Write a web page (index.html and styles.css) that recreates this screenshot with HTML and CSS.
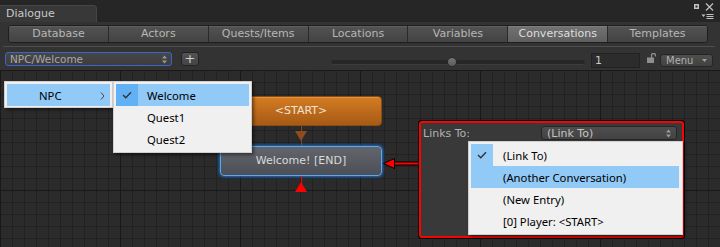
FILE: index.html
```html
<!DOCTYPE html>
<html>
<head>
<meta charset="utf-8">
<title>Dialogue</title>
<link rel="stylesheet" href="styles.css">
</head>
<body>
<div class="window">
  <div class="titlebar">
    <div class="wintab">Dialogue</div>
    <svg class="winctrl" viewBox="0 0 20 17" width="20" height="17">
      <rect x="0" y="1" width="5" height="5" fill="#c2c2c2"/>
      <rect x="1.5" y="2.5" width="2" height="2" fill="#2a2a2a"/>
      <path d="M12 0.5 L19 7.5 M19 0.5 L12 7.5" stroke="#c2c2c2" stroke-width="1.2" fill="none"/>
      <polygon points="7.5,11.5 11.5,11.5 9.5,14" fill="#c2c2c2"/>
      <path d="M12.5 11.5 H19.5 M12.5 13.5 H19.5 M12.5 15.5 H19.5" stroke="#c2c2c2" stroke-width="1" fill="none"/>
    </svg>
  </div>
  <div class="toolbar">
    <div class="tabs">
      <div class="tab">Database</div>
      <div class="tab">Actors</div>
      <div class="tab">Quests/Items</div>
      <div class="tab">Locations</div>
      <div class="tab">Variables</div>
      <div class="tab sel">Conversations</div>
      <div class="tab">Templates</div>
    </div>
    <div class="sep"></div>
    <div class="row2">
      <div class="popup-field">
        <span>NPC/Welcome</span>
        <svg class="updown" viewBox="0 0 5 9" width="5" height="9"><polygon points="0,3.5 5,3.5 2.5,0.5" fill="#9a9a9a"/><polygon points="0,5.5 5,5.5 2.5,8.5" fill="#9a9a9a"/></svg>
      </div>
      <div class="plus">+</div>
      <div class="slider"><div class="thumb"></div></div>
      <div class="numfield">1</div>
      <svg class="lock" viewBox="0 0 9 10" width="9" height="10">
        <path d="M4.5 5 V2.5 A2 2 0 0 1 8.5 2.5 V3.5" stroke="#8e8e8e" stroke-width="1.3" fill="none"/>
        <rect x="0" y="4.5" width="7" height="5.5" fill="#8e8e8e"/>
      </svg>
      <div class="menu-btn"><span>Menu</span><svg viewBox="0 0 5 3" width="5" height="3"><polygon points="0,0 5,0 2.5,3" fill="#a0a0a0"/></svg></div>
    </div>
  </div>
  <div class="canvas">
    <div class="node start">&lt;START&gt;</div>
    <div class="link brown-line"></div>
    <div class="tri-down"></div>
    <div class="node welcome">Welcome! [END]</div>
    <div class="link red-line"></div>
    <div class="tri-up"></div>

    <svg class="red-arrow" viewBox="0 0 38 13" width="38" height="13">
      <rect x="11" y="4.5" width="27" height="4" fill="#000"/>
      <rect x="11" y="5.5" width="27" height="2" fill="#ff0000"/>
      <polygon points="1.5,6.5 12.5,1.5 12.5,11.5" fill="#ff0000" stroke="#000" stroke-width="1"/>
    </svg>

    <div class="panel">
      <div class="panel-row">
        <span class="panel-label">Links To:</span>
        <div class="panel-popup">
          <span>(Link To)</span>
          <svg class="updown" viewBox="0 0 5 9" width="5" height="9"><polygon points="0,3.5 5,3.5 2.5,0.5" fill="#9a9a9a"/><polygon points="0,5.5 5,5.5 2.5,8.5" fill="#9a9a9a"/></svg>
        </div>
      </div>
    </div>

    <div class="menu menu-npc">
      <div class="mi hl npc-row"><span>NPC</span>
        <svg class="chev" viewBox="0 0 5 8" width="5" height="8"><polyline points="1,0.5 4,4 1,7.5" fill="none" stroke="#444" stroke-width="1"/></svg>
      </div>
    </div>
    <div class="menu menu-conv">
      <div class="mi hl"><span class="ck dark"><svg viewBox="0 0 10 8" width="10" height="8"><polyline points="1,4 3.8,6.8 9,1.2" fill="none" stroke="#333" stroke-width="1.4"/></svg></span><span class="mt">Welcome</span></div>
      <div class="mi"><span class="ck"></span><span class="mt">Quest1</span></div>
      <div class="mi"><span class="ck"></span><span class="mt">Quest2</span></div>
    </div>

    <div class="menu menu-links">
      <div class="mi"><span class="ck lite"><svg viewBox="0 0 10 8" width="10" height="8"><polyline points="1,4 3.8,6.8 9,1.2" fill="none" stroke="#333" stroke-width="1.4"/></svg></span><span class="mt2">(Link To)</span></div>
      <div class="mi hl"><span class="ck"></span><span class="mt2">(Another Conversation)</span></div>
      <div class="mi"><span class="ck"></span><span class="mt2">(New Entry)</span></div>
      <div class="mi"><span class="ck"></span><span class="mt2">[0] Player: &lt;START&gt;</span></div>
    </div>
  </div>
</div>
</body>
</html>
```
FILE: styles.css
```css
* { box-sizing: border-box; margin: 0; padding: 0; }
html, body { width: 720px; height: 247px; overflow: hidden; background: #282828; }
body { font-family: "DejaVu Sans", sans-serif; font-size: 11px; color: #c0c0c0; }

.window { display: flex; flex-direction: column; width: 720px; height: 247px; }

.titlebar { height: 22px; display: flex; background: #262626; flex-shrink: 0; }
.wintab {
  margin-top: 5px; width: 97px; height: 17px;
  background: #383838;
  border-top: 1px solid #464646; border-right: 1px solid #464646;
  border-radius: 0 4px 0 0;
  padding-left: 6px; line-height: 16px; color: #c8c8c8;
}
.winctrl { margin-left: auto; margin-right: 6px; margin-top: 3px; }

.toolbar { height: 48px; background: #333333; flex-shrink: 0; display: flex; flex-direction: column; }
.tabs {
  display: flex; margin: 3px 0 0 8px; width: 700px; height: 18px;
  border: 1px solid #1e1e1e; border-radius: 3px; overflow: hidden;
}
.tab {
  flex: 1; text-align: center; line-height: 16px;
  background: linear-gradient(#535353, #434343);
  color: #b6b6b6;
  border-left: 1px solid #2a2a2a;
  box-shadow: inset 0 1px 0 #5f5f5f;
}
.tab:first-child { border-left: none; }
.tab.sel { background: linear-gradient(#727272, #5f5f5f); color: #dedede; box-shadow: inset 0 1px 0 #7e7e7e; }

.sep { margin: 3px 5px 0 3px; height: 1px; background: #4e4e4e; }

.row2 { display: flex; align-items: flex-start; margin-top: 5px; height: 16px; }
.popup-field {
  margin-left: 5px; width: 167px; height: 14px;
  display: flex; align-items: center; justify-content: space-between;
  padding: 0 4px 0 4px;
  background: linear-gradient(#474747, #3d3d3d);
  border: 1px solid #3d64cc; border-radius: 3px;
  font-size: 10.5px; color: #a8a8a8;
}
.plus {
  margin-left: 9px; width: 18px; height: 14px;
  background: linear-gradient(#525252, #444444);
  border: 1px solid #232323; border-radius: 3px;
  color: #cfcfcf; font-size: 13px; line-height: 11px; text-align: center;
}
.slider {
  margin-left: 132px; margin-top: 8px; width: 254px; height: 4px;
  background: #272727; border-radius: 2px; box-shadow: 0 1px 0 #3c3c3c;
  display: flex; align-items: center;
}
.thumb {
  flex-shrink: 0; margin-left: 116px; width: 10px; height: 10px; border-radius: 50%;
  background: linear-gradient(#747474, #5c5c5c); border: 1px solid #2a2a2a;
}
.numfield {
  margin-left: 6px; margin-top: 1px; width: 49px; height: 15px;
  background: #2c2c2c; border: 1px solid #222; 
  padding-left: 3px; line-height: 13px; color: #cacaca; font-size: 11px;
}
.lock { margin-left: 7px; margin-top: 1px; }
.menu-btn {
  margin-left: 4px; margin-top: 2px; width: 53px; height: 13px;
  background: linear-gradient(#4f4f4f, #414141);
  border: 1px solid #252525; border-radius: 3px;
  display: flex; align-items: center; justify-content: space-between;
  padding: 0 5px 0 5px; font-size: 10px; color: #b0b0b0;
}

.canvas {
  flex: 1; position: relative; overflow: hidden;
  background-color: #2b2b2b;
  background-image:
    linear-gradient(to right, #191919 1px, transparent 1px),
    linear-gradient(to bottom, #191919 1px, transparent 1px),
    linear-gradient(to right, #222222 1px, transparent 1px),
    linear-gradient(to bottom, #222222 1px, transparent 1px);
  background-size: 120px 120px, 120px 120px, 12px 12px, 12px 12px;
}

.node {
  position: absolute; left: 220px; width: 162px; height: 30px;
  border-radius: 4px; text-align: center; line-height: 28px; font-size: 11px;
}
.start {
  top: 26px;
  background: linear-gradient(#d47c22, #a65a15);
  border: 1px solid #8a4c12;
  box-shadow: inset 0 1px 0 #e2913c;
  color: #f0e4d8;
}
.welcome {
  top: 76px;
  background: linear-gradient(#62656b, #4c4f55);
  border: 1px solid #5aa8f2;
  box-shadow: 0 0 3px 1px #1f6cc6;
  color: #dadada;
}
.link { position: absolute; left: 301px; width: 1px; }
.brown-line { top: 56px; height: 20px; background: #8a4a1e; }
.red-line { top: 106px; height: 8px; background: #ff0000; }
.tri-down {
  position: absolute; left: 295px; top: 61px; width: 0; height: 0;
  border-left: 6px solid transparent; border-right: 6px solid transparent;
  border-top: 10px solid #8e4c20;
}
.tri-up {
  position: absolute; left: 295px; top: 112px; width: 0; height: 0;
  border-left: 6px solid transparent; border-right: 6px solid transparent;
  border-bottom: 10px solid #ff0000;
}
.red-arrow { position: absolute; left: 382px; top: 87px; }

.panel {
  position: absolute; left: 419px; top: 51px; width: 265px; height: 117px;
  background: #393939; border: 2px solid #ff0000; border-radius: 3px;
  box-shadow: 0 0 0 1px #000;
  padding: 3px 5px 0 2px;
}
.panel-row { display: flex; align-items: center; height: 14px; }
.panel-label { color: #b2b2b2; font-size: 11px; }
.panel-popup {
  margin-left: auto; width: 136px; height: 14px;
  display: flex; align-items: center; justify-content: space-between;
  padding: 0 5px 0 5px;
  background: linear-gradient(#4e4e4e, #424242);
  border: 1px solid #262626; border-radius: 3px;
  color: #c4c4c4; font-size: 11px;
}

.menu {
  position: absolute; background: #f0f0f0; border: 1px solid #cfcfcf;
  box-shadow: 2px 2px 3px rgba(0,0,0,0.45);
  padding: 2px;
  font-family: "Noto Sans", sans-serif; font-size: 11.3px; color: #000;
}
.mi { height: 22px; display: flex; align-items: center; }
.mi.hl { background: #91c9f7; }
.ck { width: 22px; height: 22px; display: flex; align-items: center; justify-content: center; flex-shrink: 0; }
.ck.dark { background: #62b1f5; }
.ck.lite { background: #91c9f7; }
.mt { padding-left: 9px; }
.mt2 { padding-left: 10px; }

.menu-npc { left: 4px; top: 11px; width: 109px; height: 27px; }
.npc-row { padding: 0 5px 0 32px; justify-content: space-between; }
.chev { margin-top: 1px; }
.menu-conv { left: 113px; top: 11px; width: 139px; height: 72px; }
.menu-links { left: 468px; top: 71px; width: 215px; height: 94px; padding: 2px 3px 2px 2px; }
```
